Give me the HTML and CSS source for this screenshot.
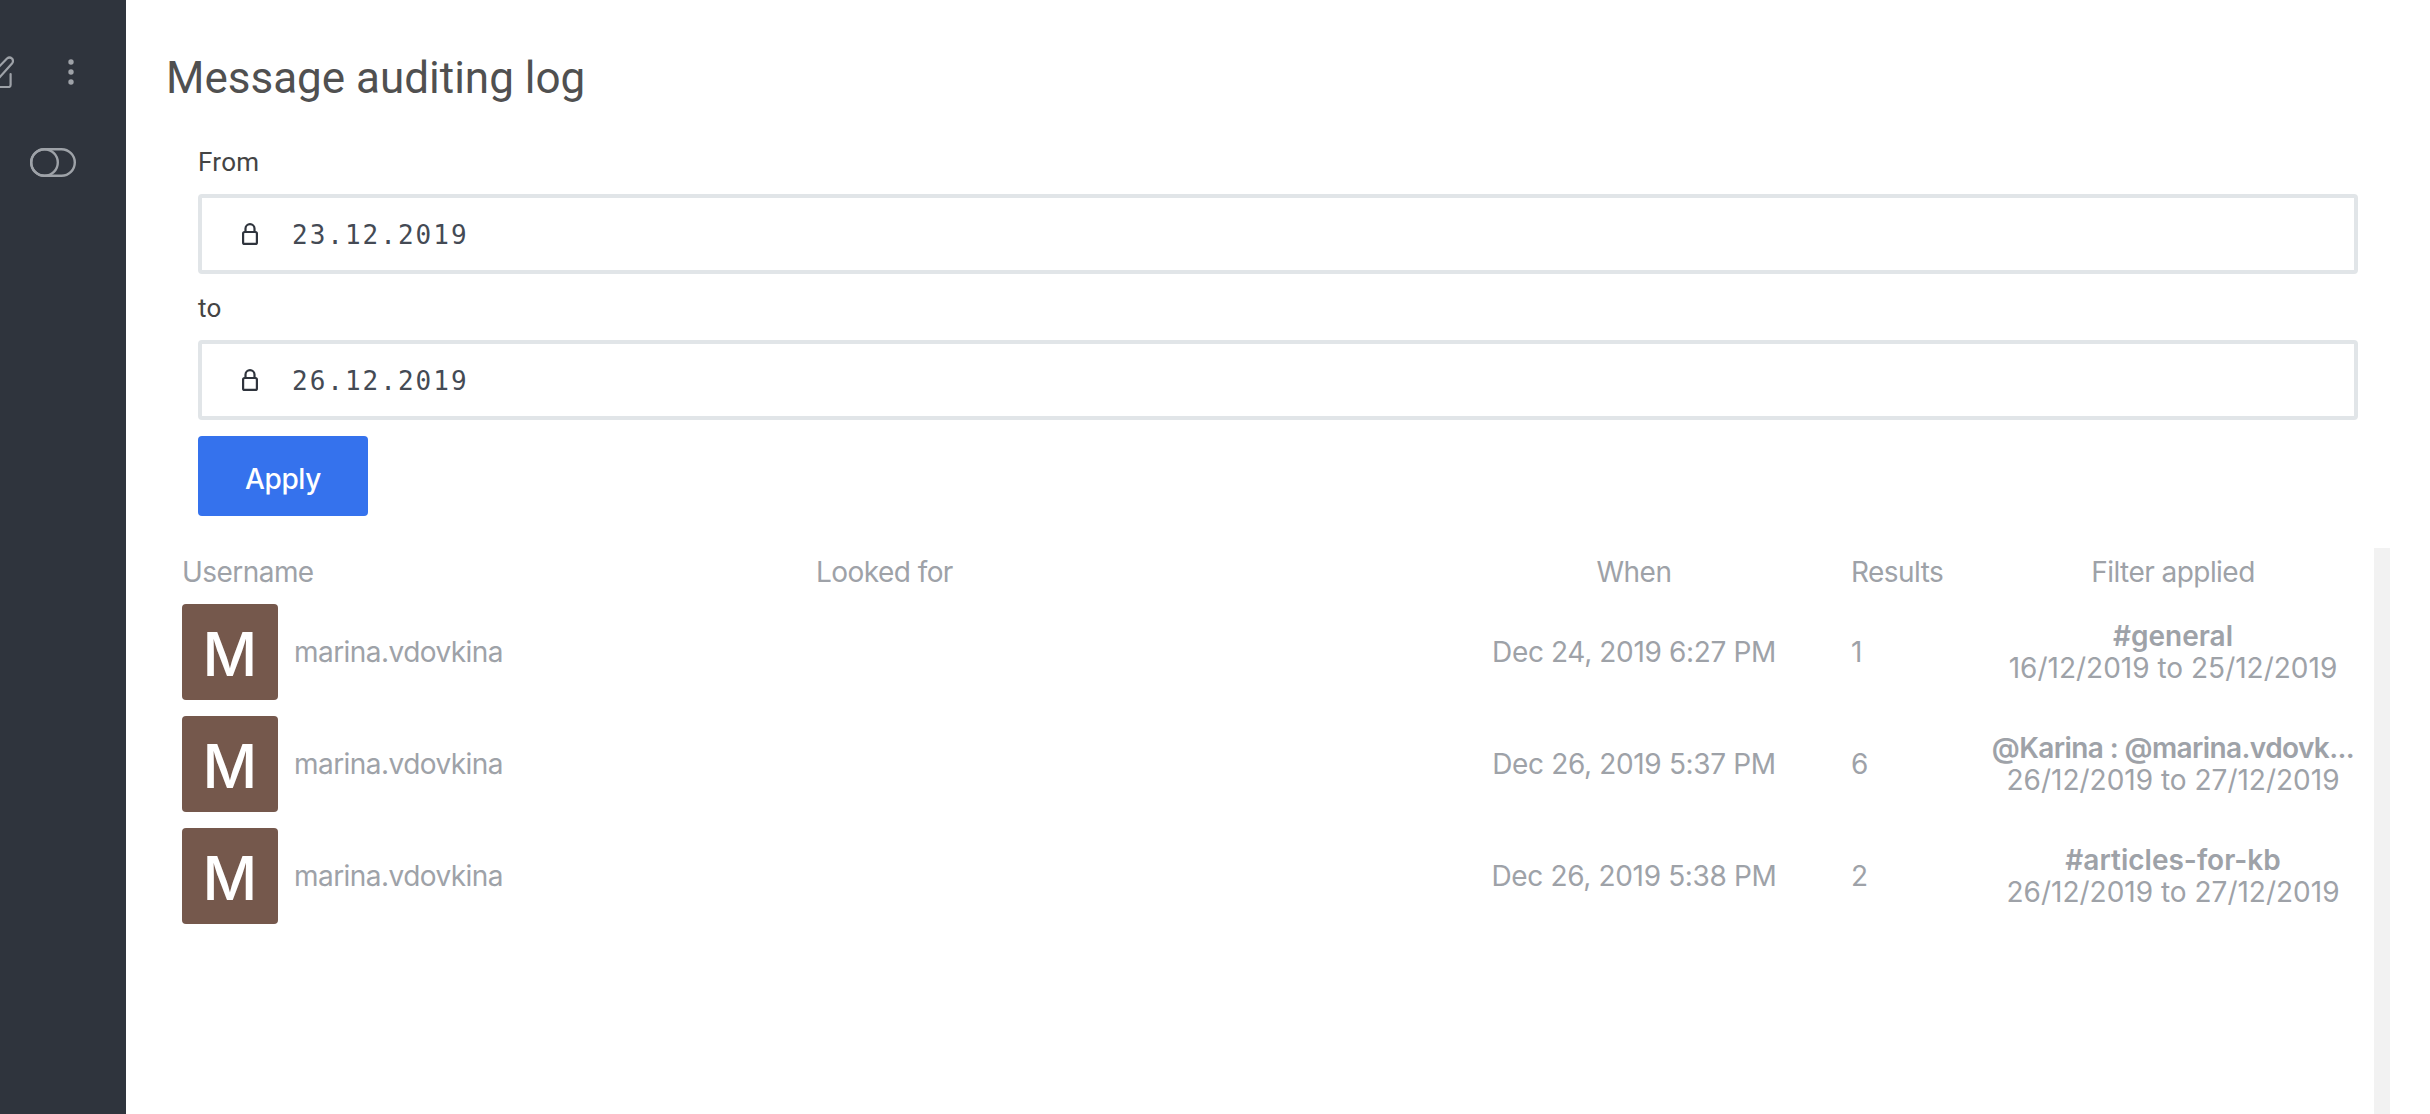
FILE: index.html
```html
<!DOCTYPE html>
<html lang="en">
<head>
<meta charset="utf-8">
<title>Message auditing log</title>
<link rel="stylesheet" href="styles.css">
</head>
<body>
<aside class="sidebar">
  <div class="side-top">
    <svg class="pencil" width="34" height="32" viewBox="-20 56 34 32" fill="none" stroke="#9ea2a8" stroke-width="2.2" stroke-linecap="round" stroke-linejoin="round">
      <path d="M-6 72 L7 58.5 Q9.5 56.5 12 58.5 Q14 61 12 63.5 L-1 78 L-7 80 Z"/>
      <path d="M10.6 74 V85 Q10.6 87 8.6 87 H-20"/>
    </svg>
    <svg class="kebab" width="6" height="26" viewBox="0 0 6 26" fill="#9ea2a8">
      <circle cx="3" cy="3" r="2.7"/><circle cx="3" cy="13" r="2.7"/><circle cx="3" cy="23" r="2.7"/>
    </svg>
  </div>
  <svg class="toggle" width="46" height="29" viewBox="0 0 46 29" fill="none" stroke="#9ea2a8" stroke-width="2.4">
    <rect x="1.2" y="1.2" width="43.6" height="26.6" rx="13.3"/>
    <circle cx="14.5" cy="14.5" r="13.3"/>
  </svg>
</aside>
<main class="content">
  <h1 class="title">Message auditing log</h1>
  <form class="filters">
    <label class="field-label">From</label>
    <div class="input">
      <svg class="lock" width="16" height="22" viewBox="0 0 16 22" fill="none" stroke="#2f343d" stroke-width="2.2"><rect x="1.1" y="9" width="13.8" height="11.9" rx="1.5"/><path d="M3.5 9V5.6a4.5 4.5 0 0 1 9 0V9"/></svg>
      <span class="date">23.12.2019</span>
    </div>
    <label class="field-label to">to</label>
    <div class="input">
      <svg class="lock" width="16" height="22" viewBox="0 0 16 22" fill="none" stroke="#2f343d" stroke-width="2.2"><rect x="1.1" y="9" width="13.8" height="11.9" rx="1.5"/><path d="M3.5 9V5.6a4.5 4.5 0 0 1 9 0V9"/></svg>
      <span class="date">26.12.2019</span>
    </div>
    <button class="apply" type="button">Apply</button>
  </form>
  <div class="table-wrap">
    <div class="table">
      <div class="row head">
        <div>Username</div><div>Looked for</div><div class="center">When</div><div class="results">Results</div><div class="center">Filter applied</div>
      </div>
      <div class="row">
        <div class="user"><span class="avatar">M</span>marina.vdovkina</div><div></div><div class="center when">Dec 24, 2019 6:27 PM</div><div class="results">1</div>
        <div class="center filter"><strong>#general</strong><span>16/12/2019 to 25/12/2019</span></div>
      </div>
      <div class="row">
        <div class="user"><span class="avatar">M</span>marina.vdovkina</div><div></div><div class="center when">Dec 26, 2019 5:37 PM</div><div class="results">6</div>
        <div class="center filter"><strong class="tight">@Karina : @marina.vdovk...</strong><span>26/12/2019 to 27/12/2019</span></div>
      </div>
      <div class="row">
        <div class="user"><span class="avatar">M</span>marina.vdovkina</div><div></div><div class="center when">Dec 26, 2019 5:38 PM</div><div class="results">2</div>
        <div class="center filter"><strong>#articles-for-kb</strong><span>26/12/2019 to 27/12/2019</span></div>
      </div>
    </div>
    <div class="scrollbar"></div>
  </div>
</main>
</body>
</html>
```
FILE: styles.css
```css
* { box-sizing: border-box; }
html, body { height: 100%; }
body {
  margin: 0;
  height: 1114px;
  overflow: hidden;
  display: flex;
  background: #fff;
  font-family: Inter, "Liberation Sans", sans-serif;
}
.sidebar {
  width: 126px;
  flex: none;
  background: #2f343d;
  display: flex;
  flex-direction: column;
  padding-top: 56px;
}
.side-top {
  display: flex;
  align-items: center;
  height: 32px;
  margin-left: -20px;
  gap: 54px;
}
.toggle { margin: 60px 0 0 30px; }
.content {
  flex: 1;
  display: flex;
  flex-direction: column;
  min-width: 0;
}
.title {
  margin: 50px 0 0 40px;
  font: 400 44px/56px Roboto, sans-serif;
  color: #505050;
}
.filters {
  display: flex;
  flex-direction: column;
  align-items: flex-start;
  margin: 0 72px;
  padding-top: 40px;
}
.field-label {
  font: 400 26px/32px Roboto, sans-serif;
  letter-spacing: 0.3px;
  color: #444;
  height: 32px;
}
.input {
  margin-top: 16px;
  width: 100%;
  height: 80px;
  border: 4px solid #e1e5e8;
  border-radius: 4px;
  display: flex;
  align-items: center;
  padding-left: 40px;
  margin-bottom: 18px;
}
.lock { margin-right: 34px; }
.date {
  padding-top: 2px;
  font: 400 26px/32px "DejaVu Sans Mono", monospace;
  letter-spacing: 2px;
  color: #444a54;
}
.apply {
  width: 170px;
  height: 80px;
  border: 0;
  border-radius: 4px;
  background: #3572ed;
  color: #fff;
  padding: 6px 0 0;
  font: 500 28px/32px Inter, sans-serif;
  letter-spacing: -0.4px;
  margin-top: -2px;
}
.table-wrap {
  flex: 1;
  display: flex;
  margin-top: 32px;
  padding: 0 40px 0 56px;
  min-height: 0;
}
.table { flex: 1; min-width: 0; }
.scrollbar { width: 16px; flex: none; background: #f2f2f2; }
.row {
  display: grid;
  grid-template-columns: 634px 634px 368px 154px 1fr;
  align-items: center;
  height: 112px;
  color: #9ea2a8;
  font-size: 28px;
  line-height: 32px;
  letter-spacing: -0.55px;
}
.row.head { height: 48px; }
.center { text-align: center; }
.when { letter-spacing: -0.35px; }
.results { padding-left: 33px; }
.user { display: flex; align-items: center; gap: 16px; }
.avatar {
  width: 96px;
  height: 96px;
  flex: none;
  border-radius: 4px;
  background: #75584c;
  color: #fff;
  font-size: 60px;
  font-weight: 500;
  letter-spacing: 0;
  line-height: 100px;
  text-align: center;
}
.filter { display: flex; flex-direction: column; min-width: 0; letter-spacing: 0; }
.filter strong, .filter span { white-space: nowrap; }
.filter strong { font-weight: 600; }
.filter strong.tight { letter-spacing: -0.6px; }
```
